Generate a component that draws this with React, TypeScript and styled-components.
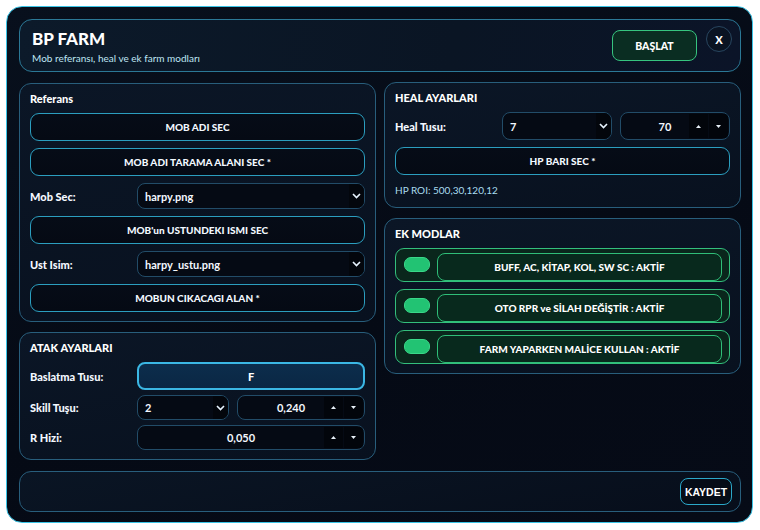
import React from 'react';
import styled, { createGlobalStyle } from 'styled-components';

const GlobalStyle = createGlobalStyle`
  html, body {
    margin: 0;
    padding: 0;
    background: #ffffff;
  }
  body {
    font-family: Lato, "Liberation Sans", Arial, sans-serif;
    color: #eef6ff;
  }
  * {
    box-sizing: border-box;
  }
`;

const Page = styled.div`
  padding: 6px 0 0 6px;
`;

const Window = styled.div`
  width: 747px;
  height: 517px;
  display: flex;
  flex-direction: column;
  padding: 12px 11px 10px 12px;
  border: 1px solid #3ac4e6;
  border-radius: 16px;
  background: linear-gradient(160deg, #08101d 0%, #050a15 55%, #060b17 100%);
`;

const Header = styled.header`
  display: flex;
  align-items: center;
  justify-content: space-between;
  height: 53px;
  padding: 6px 8px 6px 12px;
  border: 1px solid #2b7896;
  border-radius: 13px;
  background: linear-gradient(100deg, #0c1a2a 0%, #0a1524 60%, #0b1428 100%);
`;

const TitleBlock = styled.div`
  display: flex;
  flex-direction: column;
  gap: 3px;
  padding-top: 2px;
`;

const Title = styled.h1`
  margin: 0;
  font-size: 17px;
  line-height: 20px;
  font-weight: 900;
  color: #ffffff;
`;

const Subtitle = styled.p`
  margin: 0;
  font-size: 10px;
  line-height: 12px;
  color: #bfe6f4;
`;

const HeaderActions = styled.div`
  display: flex;
  align-items: flex-start;
  gap: 9px;
  align-self: stretch;
`;

const StartButton = styled.button`
  margin-top: 4px;
  width: 85px;
  height: 31px;
  border: 1px solid #36c47f;
  border-radius: 8px;
  background: #0a2d22;
  color: #ffffff;
  font-family: inherit;
  font-size: 10.5px;
  font-weight: 900;
`;

const CloseButton = styled.button`
  width: 26px;
  height: 26px;
  padding: 0;
  border: 1px solid #284660;
  border-radius: 50%;
  background: #0a1322;
  color: #ffffff;
  font-family: inherit;
  font-size: 11px;
  font-weight: 900;
`;

const Columns = styled.div`
  display: grid;
  grid-template-columns: 1fr 1fr;
  gap: 8px;
  margin-top: 10px;
  align-items: start;
`;

const Column = styled.div`
  display: flex;
  flex-direction: column;
  gap: 10px;
`;

const Card = styled.section<{ $top?: number; $gap?: number; $bottom?: number }>`
  display: flex;
  flex-direction: column;
  gap: ${(p) => p.$gap ?? 7}px;
  margin-top: ${(p) => p.$top ?? 0}px;
  padding: 8px 10px ${(p) => p.$bottom ?? 9}px;
  border: 1px solid #285e7c;
  border-radius: 12px;
  background: linear-gradient(170deg, #0b1626 0%, #08111f 100%);
`;

const CardTitle = styled.h2<{ $after?: number }>`
  margin: 0 0 ${(p) => p.$after ?? 0}px;
  font-size: 11px;
  line-height: 14px;
  font-weight: 900;
  color: #ffffff;
`;

const ActionButton = styled.button<{ $h?: number }>`
  width: 100%;
  height: ${(p) => p.$h ?? 28}px;
  border: 1px solid #2b9ebf;
  border-radius: 9px;
  background: linear-gradient(180deg, #060c17 0%, #050a14 100%);
  color: #f2f8ff;
  font-family: inherit;
  font-size: 10px;
  font-weight: 900;
`;

const KeyButton = styled.button`
  width: 100%;
  height: 28px;
  border: 2px solid #3bb7e4;
  border-radius: 8px;
  background: linear-gradient(180deg, #0c2d4c 0%, #0a2744 100%);
  color: #ffffff;
  font-family: inherit;
  font-size: 11px;
  font-weight: 900;
`;

const FieldRow = styled.div<{ $h?: number }>`
  display: grid;
  grid-template-columns: 107px 1fr;
  align-items: center;
  height: ${(p) => p.$h ?? 26}px;
`;

const Label = styled.span`
  font-size: 11px;
  font-weight: 900;
  color: #f4f8ff;
`;

const Pair = styled.div<{ $cols: string }>`
  display: grid;
  grid-template-columns: ${(p) => p.$cols};
  gap: 8px;
  height: 100%;
`;

const SelectBox = styled.div`
  display: flex;
  align-items: stretch;
  height: 100%;
  border: 1px solid #224c68;
  border-radius: 8px;
  background: #050a14;
  overflow: hidden;
`;

const SelectValue = styled.span`
  flex: 1;
  display: flex;
  align-items: center;
  padding-left: 7px;
  font-size: 11px;
  font-weight: 700;
  color: #f4f8ff;
`;

const Chevron = styled.span`
  width: 15px;
  display: flex;
  align-items: center;
  justify-content: center;
  background: #03060c;
`;

const SpinBox = styled.div`
  display: flex;
  align-items: stretch;
  height: 100%;
  border: 1px solid #224c68;
  border-radius: 8px;
  background: #050a14;
  overflow: hidden;
`;

const SpinValue = styled.span`
  flex: 1;
  display: flex;
  align-items: center;
  justify-content: center;
  padding-left: 20px;
  font-size: 11px;
  font-weight: 700;
  color: #f4f8ff;
`;

const SpinArrow = styled.span`
  width: 19px;
  display: flex;
  align-items: center;
  justify-content: center;
  margin: 1px 0;
  background: #02050b;
  & + & {
    margin-left: 1px;
    margin-right: 1px;
  }
`;

const InfoText = styled.p`
  margin: 1px 0 0;
  font-size: 10px;
  line-height: 14px;
  color: #a9dcef;
`;

const ModeRow = styled.div`
  display: flex;
  align-items: center;
  gap: 7px;
  height: 34px;
  flex-shrink: 0;
  padding: 4px 7px 0 8px;
  border: 1px solid #33bf7c;
  border-radius: 9px;
  background: #0a261c;
`;

const Toggle = styled.span<{ $on: boolean }>`
  width: 26px;
  height: 15px;
  margin-bottom: 5px;
  flex-shrink: 0;
  border-radius: 7px;
  background: ${(p) => (p.$on ? '#22c373' : '#304050')};
  border: 1px solid ${(p) => (p.$on ? '#3ad889' : '#405060')};
`;

const ModeButton = styled.button`
  flex: 1;
  height: 28px;
  border: 1px solid #2fbe78;
  border-radius: 8px;
  background: #08291d;
  color: #ffffff;
  font-family: inherit;
  font-size: 10px;
  font-weight: 900;
`;

const Footer = styled.footer`
  display: flex;
  align-items: center;
  justify-content: flex-end;
  height: 41px;
  margin-top: auto;
  padding-right: 8px;
  border: 1px solid #285e7c;
  border-radius: 12px;
  background: linear-gradient(170deg, #0a1524 0%, #070e1b 100%);
`;

const SaveButton = styled.button`
  width: 52px;
  height: 27px;
  padding: 0;
  border: 1px solid #2ba8c9;
  border-radius: 8px;
  background: #060c17;
  color: #ffffff;
  font-family: "Liberation Sans Narrow", "Liberation Sans", sans-serif;
  font-size: 10.5px;
  font-weight: 700;
`;

const ChevronIcon = () => (
  <svg width="9" height="6" viewBox="0 0 9 6">
    <polyline points="1,1 4.5,4.5 8,1" fill="none" stroke="#e8f4ff" strokeWidth="1.6" />
  </svg>
);

const Tri = ({ up }: { up: boolean }) => (
  <svg width="5" height="3" viewBox="0 0 5 3">
    <polygon points={up ? '0,3 2.5,0 5,3' : '0,0 5,0 2.5,3'} fill="#e8f0f8" />
  </svg>
);

const Select = ({ value }: { value: string }) => (
  <SelectBox>
    <SelectValue>{value}</SelectValue>
    <Chevron>
      <ChevronIcon />
    </Chevron>
  </SelectBox>
);

const Spin = ({ value }: { value: string }) => (
  <SpinBox>
    <SpinValue>{value}</SpinValue>
    <SpinArrow>
      <Tri up />
    </SpinArrow>
    <SpinArrow>
      <Tri up={false} />
    </SpinArrow>
  </SpinBox>
);

const modes = [
  'BUFF, AC, KİTAP, KOL, SW SC : AKTİF',
  'OTO RPR ve SİLAH DEĞİŞTİR : AKTİF',
  'FARM YAPARKEN MALİCE KULLAN : AKTİF',
];

export default function App() {
  return (
    <Page>
      <GlobalStyle />
      <Window>
        <Header>
          <TitleBlock>
            <Title>BP FARM</Title>
            <Subtitle>Mob referansı, heal ve ek farm modları</Subtitle>
          </TitleBlock>
          <HeaderActions>
            <StartButton>BAŞLAT</StartButton>
            <CloseButton>X</CloseButton>
          </HeaderActions>
        </Header>

        <Columns>
          <Column>
            <Card $top={1}>
              <CardTitle>Referans</CardTitle>
              <ActionButton>MOB ADI SEC</ActionButton>
              <ActionButton>MOB ADI TARAMA ALANI SEC *</ActionButton>
              <FieldRow>
                <Label>Mob Sec:</Label>
                <Select value="harpy.png" />
              </FieldRow>
              <ActionButton>MOB'un USTUNDEKI ISMI SEC</ActionButton>
              <FieldRow>
                <Label>Ust Isim:</Label>
                <Select value="harpy_ustu.png" />
              </FieldRow>
              <ActionButton>MOBUN CIKACAGI ALAN *</ActionButton>
            </Card>

            <Card $gap={5}>
              <CardTitle $after={2}>ATAK AYARLARI</CardTitle>
              <FieldRow $h={28}>
                <Label>Baslatma Tusu:</Label>
                <KeyButton>F</KeyButton>
              </FieldRow>
              <FieldRow $h={25}>
                <Label>Skill Tuşu:</Label>
                <Pair $cols="92px 1fr">
                  <Select value="2" />
                  <Spin value="0,240" />
                </Pair>
              </FieldRow>
              <FieldRow $h={25}>
                <Label>R Hizi:</Label>
                <Spin value="0,050" />
              </FieldRow>
            </Card>
          </Column>

          <Column>
            <Card $bottom={10}>
              <CardTitle>HEAL AYARLARI</CardTitle>
              <FieldRow $h={28}>
                <Label>Heal Tusu:</Label>
                <Pair $cols="1fr 1fr">
                  <Select value="7" />
                  <Spin value="70" />
                </Pair>
              </FieldRow>
              <ActionButton>HP BARI SEC *</ActionButton>
              <InfoText>HP ROI: 500,30,120,12</InfoText>
            </Card>

            <Card>
              <CardTitle>EK MODLAR</CardTitle>
              {modes.map((m) => (
                <ModeRow key={m}>
                  <Toggle $on />
                  <ModeButton>{m}</ModeButton>
                </ModeRow>
              ))}
            </Card>
          </Column>
        </Columns>

        <Footer>
          <SaveButton>KAYDET</SaveButton>
        </Footer>
      </Window>
    </Page>
  );
}
